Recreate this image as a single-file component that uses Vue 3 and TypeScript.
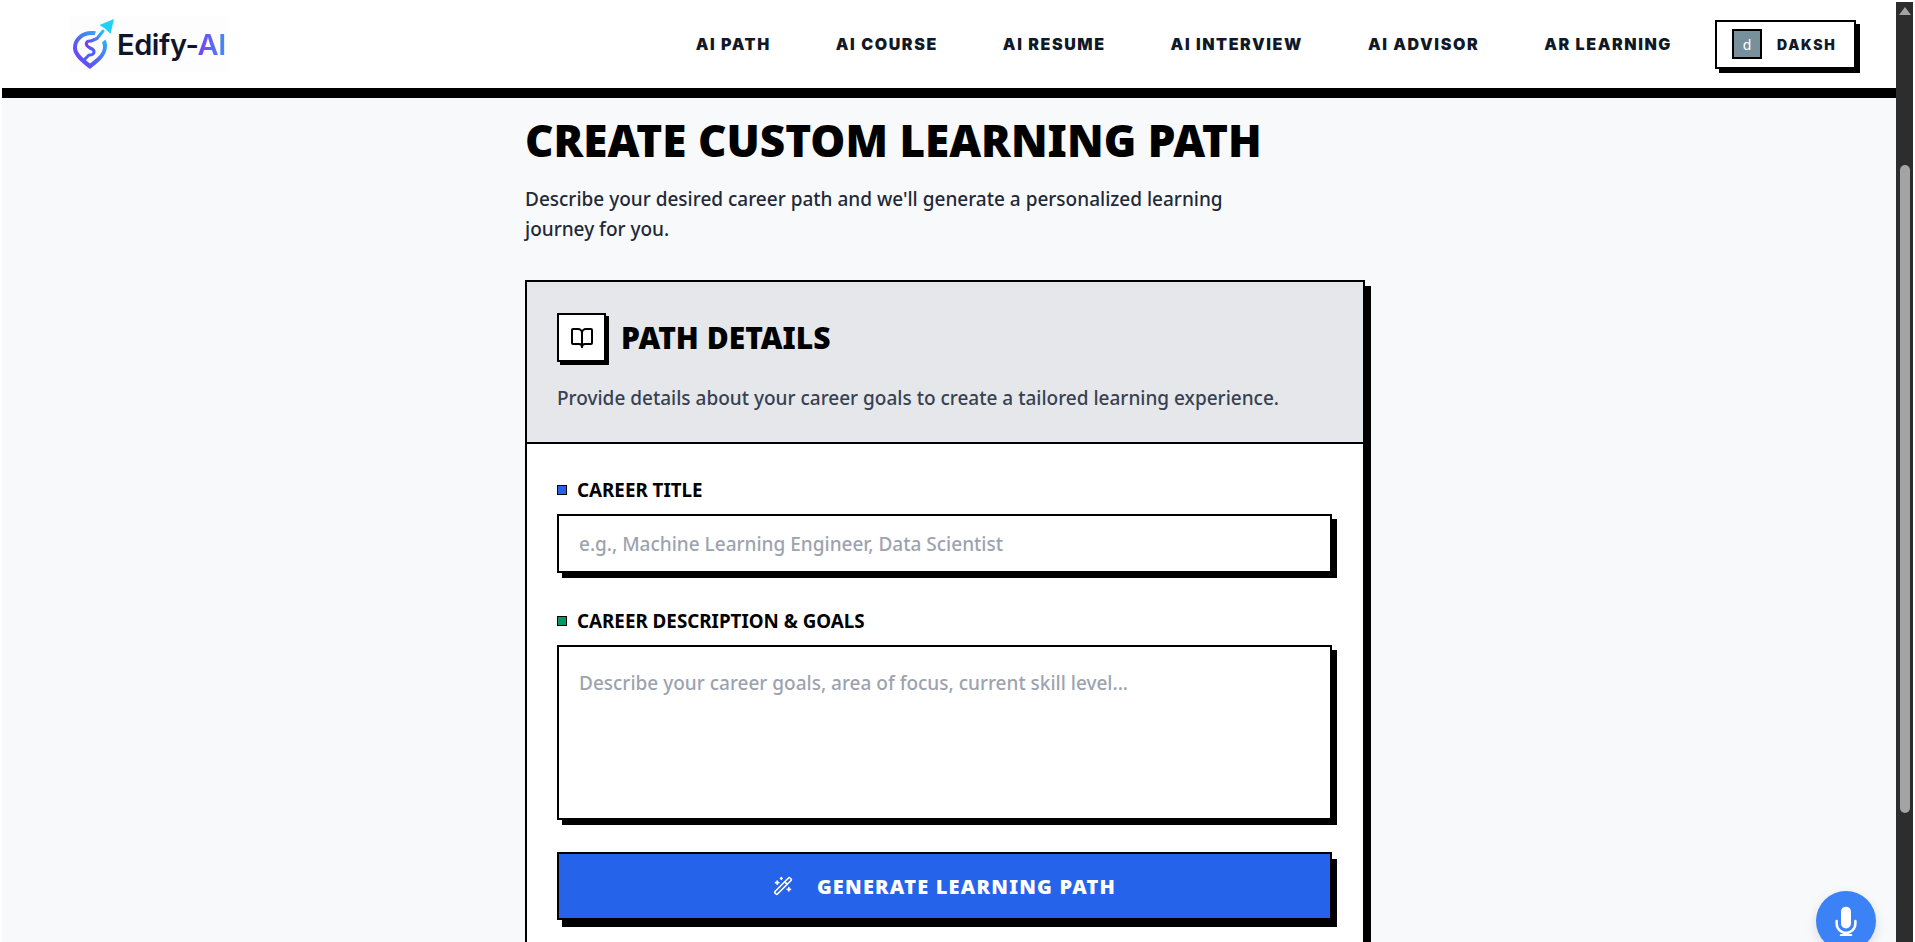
<script setup lang="ts">
import { ref } from 'vue';

const navLinks = ['AI PATH', 'AI COURSE', 'AI RESUME', 'AI INTERVIEW', 'AI ADVISOR', 'AR LEARNING'];
const careerTitle = ref('');
const careerDescription = ref('');
</script>

<template>
  <div class="shell">
    <div class="page">
      <header class="topbar">
        <a class="logo" href="#">
          <svg class="logo-mark" viewBox="0 0 46 50" width="46" height="50">
            <defs>
              <linearGradient id="pin" x1="0" y1="1" x2="1" y2="0">
                <stop offset="0" stop-color="#7a2ff5" />
                <stop offset="0.5" stop-color="#4f6cf7" />
                <stop offset="1" stop-color="#1fc8f5" />
              </linearGradient>
            </defs>
            <path d="M26 12.5C24.5 12.1 23 12 21.500 12C11 12 3 19.500 3 29C3 37 12 44 20 50C27 44.500 37 37.500 37 27C37 24.500 36.400 22.500 35.500 20.500L32 23.500C32.800 25 33 26.500 33 28C33 35 26 39.500 20 44.500C14 39.500 7 35 7 28.500C7 21.500 13.500 16 21.500 16C22.500 16 23.500 16.100 24.500 16.300Z" fill="url(#pin)" />
            <path d="M20 29C14 26 16 21.500 21 22L27 19.500L33 12" fill="none" stroke="url(#pin)" stroke-width="3" stroke-linecap="round" stroke-linejoin="round" />
            <path d="M20 29C26 31 25 36 19 36L14 41" fill="none" stroke="#4f5cf7" stroke-width="3" stroke-linecap="round" stroke-linejoin="round" />
            <path d="M44 0L40.500 15L35.500 10L29.500 6Z" fill="#1fd0f7" />
          </svg>
          <span class="logo-text">Edify-<span class="logo-ai">AI</span></span>
        </a>
        <nav class="nav">
          <a v-for="link in navLinks" :key="link" class="nav-link" href="#">{{ link }}</a>
          <button class="user-btn" type="button">
            <span class="avatar">d</span>
            <span class="user-name">DAKSH</span>
          </button>
        </nav>
      </header>

      <main class="content">
        <h1 class="page-title">CREATE CUSTOM LEARNING PATH</h1>
        <p class="page-desc">Describe your desired career path and we'll generate a personalized learning journey for you.</p>

        <section class="card">
          <div class="card-head">
            <div class="card-title-row">
              <span class="icon-box">
                <svg viewBox="0 0 24 24" width="24" height="24" fill="none" stroke="#000" stroke-width="2" stroke-linecap="round" stroke-linejoin="round">
                  <path d="M12 7v14" />
                  <path d="M3 18a1 1 0 0 1-1-1V4a1 1 0 0 1 1-1h5a4 4 0 0 1 4 4 4 4 0 0 1 4-4h5a1 1 0 0 1 1 1v13a1 1 0 0 1-1 1h-6a3 3 0 0 0-3 3 3 3 0 0 0-3-3z" />
                </svg>
              </span>
              <h2 class="card-title">PATH DETAILS</h2>
            </div>
            <p class="card-desc">Provide details about your career goals to create a tailored learning experience.</p>
          </div>

          <form class="card-body" @submit.prevent>
            <label class="field">
              <span class="field-label"><i class="dot dot-blue"></i>CAREER TITLE</span>
              <input v-model="careerTitle" class="text-input" placeholder="e.g., Machine Learning Engineer, Data Scientist" />
            </label>
            <label class="field">
              <span class="field-label"><i class="dot dot-green"></i>CAREER DESCRIPTION &amp; GOALS</span>
              <textarea v-model="careerDescription" class="text-input text-area" placeholder="Describe your career goals, area of focus, current skill level..."></textarea>
            </label>
            <button class="generate-btn" type="submit">
              <svg viewBox="0 0 24 24" width="20" height="20" fill="none" stroke="#fff" stroke-width="2" stroke-linecap="round" stroke-linejoin="round">
                <path d="m21.640 3.640-1.280-1.280a1.210 1.210 0 0 0-1.720 0L2.360 18.640a1.210 1.210 0 0 0 0 1.720l1.280 1.280a1.200 1.200 0 0 0 1.720 0L21.640 5.360a1.200 1.200 0 0 0 0-1.720" />
                <path d="m14 7 3 3" />
                <path d="M5 6v4" />
                <path d="M19 14v4" />
                <path d="M10 2v2" />
                <path d="M7 8H3" />
                <path d="M21 16h-4" />
                <path d="M11 3H9" />
              </svg>
              <span>GENERATE LEARNING PATH</span>
            </button>
          </form>
        </section>
      </main>

      <button class="mic-btn" type="button" aria-label="Voice">
        <svg viewBox="0 0 24 24" width="30" height="30" fill="none" stroke="#fff" stroke-width="2" stroke-linecap="round">
          <rect x="8" y="0.500" width="8" height="17.500" rx="4" fill="#fff" stroke="none" />
          <path d="M4.500 12v2a7.500 7.500 0 0 0 15 0v-2" />
          <path d="M12 21.500v1.500M8 23.300h8" />
        </svg>
      </button>
    </div>

    <div class="scrollbar">
      <span class="scroll-arrow"></span>
      <span class="scroll-thumb"></span>
    </div>
  </div>
</template>

<style>
html, body {
  margin: 0;
  height: 100%;
  overflow: hidden;
  background: #fff;
}
</style>

<style scoped>
.shell {
  display: flex;
  height: 942px;
  padding: 0 2px;
  box-sizing: border-box;
  font-family: "Noto Sans", "Open Sans", sans-serif;
  color: #111827;
}
.page {
  position: relative;
  flex: 1;
  min-width: 0;
  overflow: hidden;
  background: #f8f9fb;
}
.topbar {
  height: 88px;
  display: flex;
  align-items: center;
  justify-content: space-between;
  padding-left: 68px;
  padding-right: 40px;
  background: #fff;
  border-bottom: 10px solid #000;
}
.logo {
  width: 158px;
  height: 56px;
  display: flex;
  align-items: center;
  gap: 1px;
  background: #fdfdfd;
  text-decoration: none;
}
.logo-mark {
  flex: none;
}
.logo-text {
  font-family: Inter, sans-serif;
  font-size: 29px;
  font-weight: 600;
  letter-spacing: -0.4px;
  color: #10142c;
}
.logo-ai {
  background: linear-gradient(90deg, #7a3ff5, #3f8ef7);
  -webkit-background-clip: text;
  background-clip: text;
  color: transparent;
}
.nav {
  display: flex;
  align-items: center;
  gap: 65px;
}
.nav-link {
  font-family: Inter, sans-serif;
  font-size: 16px;
  font-weight: 900;
  letter-spacing: 1.6px;
  color: #111827;
  text-decoration: none;
}
.user-btn {
  width: 141px;
  height: 49px;
  margin-left: -22px;
  padding: 0 0 0 15px;
  display: flex;
  align-items: center;
  gap: 15px;
  box-sizing: border-box;
  background: #fff;
  border: 2px solid #000;
  box-shadow: 4px 4px 0 #000;
}
.avatar {
  width: 30px;
  height: 30px;
  box-sizing: border-box;
  border: 2px solid #000;
  background: #78909c;
  color: #fff;
  font-family: "Noto Sans", sans-serif;
  font-size: 14px;
  display: flex;
  align-items: center;
  justify-content: center;
}
.user-name {
  font-family: Inter, sans-serif;
  font-size: 14px;
  font-weight: 900;
  letter-spacing: 1.7px;
  color: #111827;
}
.content {
  width: 840px;
  margin-left: 523px;
}
.page-title {
  margin: 16px 0 0;
  font-size: 44px;
  line-height: 52px;
  font-weight: 900;
  color: #000;
}
.page-desc {
  width: 720px;
  margin: 18px 0 0;
  font-size: 19px;
  font-weight: 500;
  line-height: 30px;
  color: #1f2937;
}
.card {
  margin-top: 36px;
  background: #fff;
  border: 2px solid #000;
  box-shadow: 6px 6px 0 #000;
}
.card-head {
  height: 162px;
  box-sizing: border-box;
  padding: 31px 30px 0;
  background: #e5e7eb;
  border-bottom: 2px solid #000;
}
.card-title-row {
  display: flex;
  align-items: center;
  gap: 15px;
}
.icon-box {
  width: 49px;
  height: 49px;
  box-sizing: border-box;
  background: #fff;
  border: 2px solid #000;
  box-shadow: 3px 3px 0 #000;
  display: flex;
  align-items: center;
  justify-content: center;
}
.card-title {
  margin: 0;
  font-size: 30px;
  font-weight: 900;
  color: #000;
}
.card-desc {
  margin: 22px 0 0;
  font-size: 19px;
  font-weight: 500;
  line-height: 28px;
  color: #374151;
}
.card-body {
  padding: 30px 30px 60px;
  display: flex;
  flex-direction: column;
}
.field {
  display: block;
  margin-bottom: 32px;
}
.field-label {
  display: flex;
  align-items: center;
  gap: 10px;
  height: 32px;
  margin-bottom: 8px;
  font-size: 18.8px;
  font-weight: 700;
  color: #000;
}
.dot {
  width: 10px;
  height: 10px;
  box-sizing: border-box;
  border: 1px solid #000;
}
.dot-blue {
  background: #2563eb;
}
.dot-green {
  background: #059669;
}
.text-input {
  display: block;
  width: 775px;
  height: 59px;
  box-sizing: border-box;
  padding: 0 20px;
  background: #fff;
  border: 2px solid #000;
  box-shadow: 5px 5px 0 #000;
  font-family: inherit;
  font-size: 19px;
  font-weight: 500;
  color: #111827;
  outline: none;
  border-radius: 0;
}
.text-input::placeholder {
  color: #9ca3af;
  opacity: 1;
}
.text-area {
  height: 175px;
  padding: 23px 20px;
  resize: none;
}
.generate-btn {
  width: 775px;
  height: 68px;
  display: flex;
  align-items: center;
  justify-content: center;
  gap: 24px;
  background: #2563eb;
  border: 2px solid #000;
  box-shadow: 5px 7px 0 #000;
  color: #fff;
  font-family: inherit;
  font-size: 20px;
  font-weight: 900;
  letter-spacing: 1.2px;
}
.mic-btn {
  position: absolute;
  left: 1814px;
  top: 891px;
  width: 60px;
  height: 60px;
  border: 0;
  border-radius: 50%;
  background: #3b82f6;
  box-shadow: 0 4px 12px rgba(0, 0, 0, 0.12);
  display: flex;
  align-items: center;
  justify-content: center;
  padding: 0;
}
.scrollbar {
  flex: none;
  width: 17px;
  margin-top: 2px;
  background: #2d2d2d;
  display: flex;
  flex-direction: column;
  align-items: center;
}
.scroll-arrow {
  margin-top: 5px;
  width: 0;
  height: 0;
  border-left: 6px solid transparent;
  border-right: 6px solid transparent;
  border-bottom: 8px solid #a3a3a3;
}
.scroll-thumb {
  margin-top: 150px;
  width: 10px;
  height: 648px;
  border-radius: 5px;
  background: #a3a3a3;
}
</style>
